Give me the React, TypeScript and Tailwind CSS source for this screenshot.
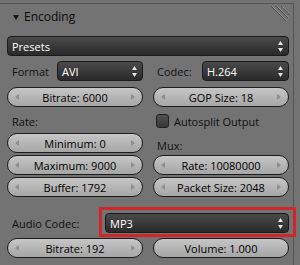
import React from 'react';

const LeftArrow = () => (
  <svg width="4" height="6" viewBox="0 0 4 6" className="shrink-0">
    <polygon points="4,0 4,6 0,3" fill="#8e8e8e" />
  </svg>
);

const RightArrow = () => (
  <svg width="4" height="6" viewBox="0 0 4 6" className="shrink-0">
    <polygon points="0,0 4,3 0,6" fill="#8e8e8e" />
  </svg>
);

const UpDown = () => (
  <svg width="5" height="11" viewBox="0 0 5 11" className="shrink-0">
    <polygon points="2.5,0 5,4 0,4" fill="#e4e4e4" />
    <polygon points="0,7 5,7 2.5,11" fill="#e4e4e4" />
  </svg>
);

const NumField: React.FC<{ label: string; arrows?: boolean }> = ({ label, arrows = true }) => (
  <div className="h-[20px] w-full rounded-[10px] border border-[#1c1c1c] bg-linear-to-b from-[#c6c6c6] to-[#a6a6a6] flex items-center justify-between px-[7px] text-[11px] text-black leading-none">
    {arrows ? <LeftArrow /> : <span className="w-[4px]" />}
    <span>{label}</span>
    {arrows ? <RightArrow /> : <span className="w-[4px]" />}
  </div>
);

const Menu: React.FC<{ label: string }> = ({ label }) => (
  <div className="h-[20px] w-full rounded-[4px] border border-[#1a1a1a] bg-linear-to-b from-[#4a4a4a] to-[#2a2a2a] flex items-center pl-[4px] pr-[5px] text-[11px] text-white leading-none">
    <span className="flex-1">{label}</span>
    <UpDown />
  </div>
);

const Label: React.FC<{ text: string }> = ({ text }) => (
  <div className="h-[20px] flex items-center pl-[5px] text-[11px] text-[#101010] leading-none">{text}</div>
);

export default function App() {
  return (
    <div className="relative w-[300px] h-[265px] overflow-hidden bg-[#737373] font-['Open_Sans',sans-serif]">
      <div className="mt-[3px] w-[294px] h-[262px] border-t border-r border-[#555555] pl-[7px] pr-[4px]">
        {/* header */}
        <div className="h-[26px] flex items-center">
          <svg width="6" height="5" viewBox="0 0 6 5" className="ml-[6px]">
            <polygon points="0,0 6,0 3,5" fill="#151515" />
          </svg>
          <span className="ml-[5px] text-[12px] text-[#0a0a0a] leading-none">Encoding</span>
        </div>

        <div className="mt-[6px]">
          <Menu label="Presets" />
        </div>

        <div className="mt-[5px] flex gap-[10px]">
          <div className="flex-1 flex items-center">
            <div className="w-[50px] pl-[5px] text-[11px] text-[#101010] leading-none">Format</div>
            <div className="flex-1"><Menu label="AVI" /></div>
          </div>
          <div className="flex-1 flex items-center">
            <div className="w-[49px] pl-[4px] text-[11px] text-[#101010] leading-none">Codec:</div>
            <div className="flex-1"><Menu label="H.264" /></div>
          </div>
        </div>

        <div className="mt-[6px] flex gap-[10px]">
          <div className="flex-1"><NumField label="Bitrate: 6000" /></div>
          <div className="flex-1"><NumField label="GOP Size: 18" /></div>
        </div>

        <div className="mt-[4px] flex gap-[10px]">
          <div className="flex-1 flex flex-col gap-[2px]">
            <Label text="Rate:" />
            <NumField label="Minimum: 0" />
            <NumField label="Maximum: 9000" />
            <NumField label="Buffer: 1792" />
          </div>
          <div className="flex-1 flex flex-col gap-[2px]">
            <div className="h-[20px] flex items-center pl-[3px]">
              <div className="w-[13px] h-[14px] rounded-[3px] border border-[#222222] bg-linear-to-b from-[#505050] to-[#383838]" />
              <span className="ml-[5px] text-[11px] text-[#101010] leading-none">Autosplit Output</span>
            </div>
            <div className="h-[20px] flex items-end pb-[2px] pl-[4px] text-[11px] text-[#101010] leading-none">Mux:</div>
            <NumField label="Rate: 10080000" />
            <NumField label="Packet Size: 2048" />
          </div>
        </div>

        <div className="mt-[16px] flex items-center">
          <div className="w-[98px] pl-[5px] text-[11px] text-[#101010] leading-none">Audio Codec:</div>
          <div className="relative flex-1">
            <Menu label="MP3" />
            <div className="absolute -top-[6px] -left-[6px] -right-[7px] -bottom-[4px] border-[3px] border-[#d0262b]" />
          </div>
        </div>

        <div className="mt-[5px] flex gap-[10px]">
          <div className="flex-1"><NumField label="Bitrate: 192" /></div>
          <div className="flex-1"><NumField label="Volume: 1.000" arrows={false} /></div>
        </div>
      </div>

      {/* corner grip */}
      <svg width="22" height="18" viewBox="0 0 22 18" className="absolute left-[270px] top-[5px]">
        <line x1="1" y1="1" x2="16" y2="16" stroke="#505050" strokeWidth="1" />
        <line x1="2" y1="1" x2="17" y2="16" stroke="#8e8e8e" strokeWidth="1" />
        <line x1="6" y1="1" x2="18" y2="13" stroke="#505050" strokeWidth="1" />
        <line x1="7" y1="1" x2="19" y2="13" stroke="#8e8e8e" strokeWidth="1" />
        <line x1="11" y1="1" x2="20" y2="10" stroke="#505050" strokeWidth="1" />
        <line x1="12" y1="1" x2="21" y2="10" stroke="#8e8e8e" strokeWidth="1" />
      </svg>
    </div>
  );
}
